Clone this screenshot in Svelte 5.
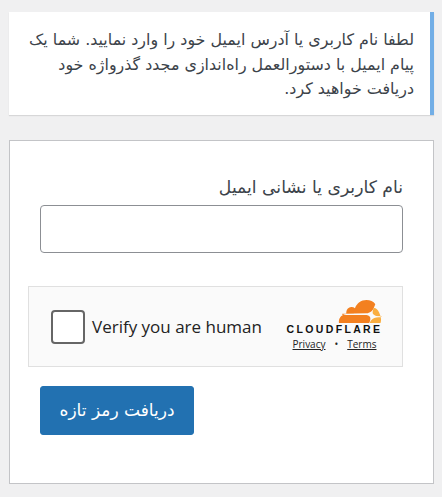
<script>
	let login = $state("");
</script>

<main dir="rtl">
	<p class="message">
		لطفا نام کاربری یا آدرس ایمیل خود را وارد نمایید. شما یک پیام ایمیل با دستورالعمل راه‌اندازی مجدد گذرواژه خود دریافت خواهید کرد.
	</p>

	<form on:submit|preventDefault>
		<label for="user_login">نام کاربری یا نشانی ایمیل</label>
		<input id="user_login" type="text" bind:value={login} />

		<div class="turnstile" dir="ltr">
			<div class="check">
				<span class="box"></span>
				<span class="verify">Verify you are human</span>
			</div>
			<div class="brand">
				<svg class="cloud" width="46" height="23" viewBox="0 0 48 25" aria-hidden="true">
					<path fill="#f38020" d="M34.500 24l.5-1.800c.5-1.700.3-3.200-.5-4.300-.8-1-2-1.600-3.500-1.700L5 15.900c-.2 0-.3-.1-.4-.2-.1-.1-.1-.3 0-.4.1-.2.300-.4.500-.4l26.200-.4c3.100-.1 6.500-2.700 7.700-5.800l1.500-3.900c.1-.2.100-.3 0-.5C38.800 1.700 35 0 31 0c-5.800 0-10.700 3.700-12.500 8.900-1.100-.9-2.600-1.300-4.100-1.200-2.800.3-5 2.500-5.300 5.300-.1.700 0 1.400.1 2.100C4.700 15.200 1 19 1 23.600c0 .4 0 .8.100 1.200 0 .2.200.3.400.3h32.100c.4 0 .7-.5.900-1.100z"/>
					<path fill="#faae40" d="M40.500 11.600h-.5c-.1 0-.2.100-.3.300l-.7 2.400c-.5 1.700-.3 3.200.5 4.300.8 1 2 1.600 3.500 1.700l5 .3c.2 0 .3.100.4.200v.4c-.1.200-.3.400-.5.400l-5.200.3c-2.800.1-5.800 2.400-6.900 5.200l-.3.900h11.500c.2 0 .4-.1.400-.3.300-1 .5-2.200.5-3.400 0-4.600-3.400-12.700-7.400-12.700z" transform="translate(-1 -3)"/>
				</svg>
				<span class="logo">CLOUDFLARE</span>
				<div class="links">
					<a href="#privacy">Privacy</a>
					<span>•</span>
					<a href="#terms">Terms</a>
				</div>
			</div>
		</div>

		<button type="submit">دریافت رمز تازه</button>
	</form>
</main>

<style>
	:global(body) {
		background: #f0f0f1;
		font-family: "DejaVu Sans", sans-serif;
		color: #3c434a;
	}

	main {
		padding: 12px 8px 13px 9px;
	}

	.message {
		margin: 0 0 25px;
		padding: 16px 16px 13px 12px;
		background: #fff;
		border-right: 4px solid #72aee6;
		box-shadow: 0 1px 1px rgba(0, 0, 0, 0.1);
		font-size: 15.9px;
		line-height: 24.5px;
	}

	form {
		display: flex;
		flex-direction: column;
		padding: 34px 30px 48px;
		height: 344px;
		box-sizing: border-box;
		background: #fff;
		border: 1px solid #c3c4c7;
	}

	label {
		font-size: 17.2px;
		line-height: 24px;
		margin-bottom: 6px;
	}

	input {
		width: 100%;
		height: 49px;
		box-sizing: border-box;
		margin: 0 0 33px;
		border: 1px solid #8c8f94;
		border-radius: 4px;
		background: #fff;
	}

	.turnstile {
		display: flex;
		justify-content: space-between;
		align-items: center;
		flex: none;
		width: 375px;
		height: 81px;
		box-sizing: border-box;
		margin: 0 0 19px -12px;
		padding: 0 19px 0 22px;
		background: #fafafa;
		border: 1px solid #e0e0e0;
		font-family: "Open Sans", "Noto Sans", sans-serif;
	}

	.check {
		display: flex;
		align-items: center;
		gap: 7px;
	}

	.box {
		width: 34px;
		height: 34px;
		box-sizing: border-box;
		margin-top: 1px;
		background: #fff;
		border: 2px solid #666;
		border-radius: 4px;
	}

	.verify {
		font-size: 17px;
		color: #232323;
	}

	.brand {
		display: flex;
		flex-direction: column;
		align-items: flex-end;
		width: 97px;
		padding-bottom: 2px;
	}

	.logo {
		align-self: center;
		font-family: "Liberation Sans", sans-serif;
		font-size: 10.5px;
		line-height: 12px;
		font-weight: 700;
		letter-spacing: 2.35px;
		color: #111;
		white-space: nowrap;
	}

	.links {
		display: flex;
		justify-content: center;
		gap: 9px;
		align-self: center;
		margin-top: 2px;
		font-size: 10px;
		line-height: 14px;
		color: #232323;
	}

	.links a {
		color: #232323;
	}

	button {
		align-self: flex-end;
		width: 154px;
		height: 50px;
		padding: 0;
		background: #2271b1;
		border: 1px solid #2271b1;
		border-radius: 3px;
		color: #fff;
		font-family: "DejaVu Sans", sans-serif;
		font-size: 17px;
		cursor: pointer;
	}
</style>
